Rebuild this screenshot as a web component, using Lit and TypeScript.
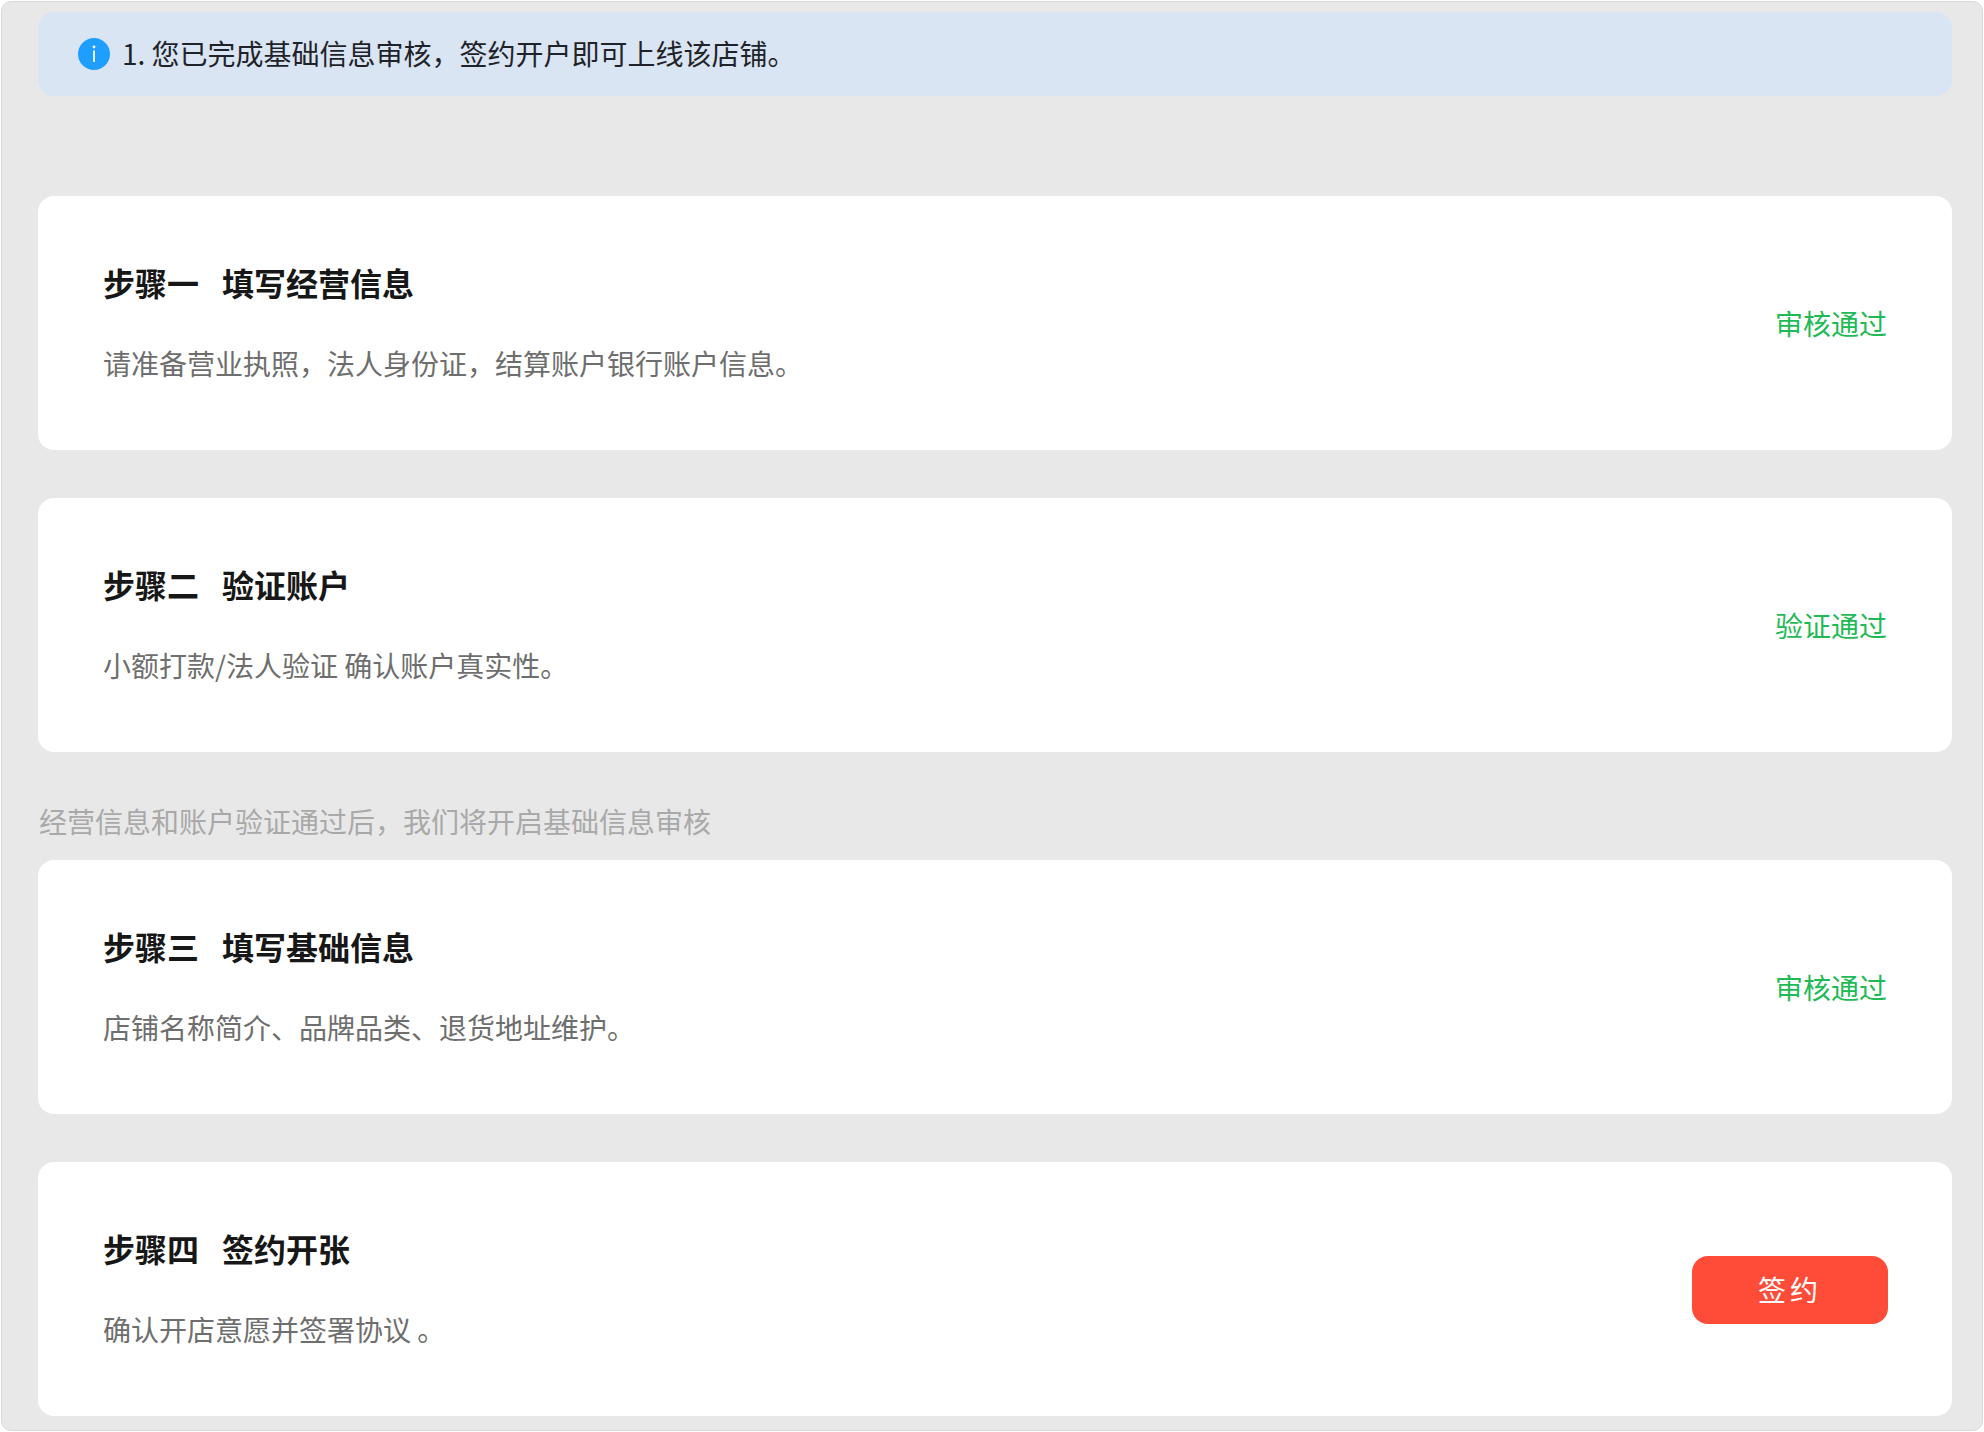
import { LitElement, html, css } from "lit";
import { customElement } from "lit/decorators.js";

interface Step {
  label: string;
  name: string;
  desc: string;
  status?: string;
  note?: string;
}

const STEPS: Step[] = [
  { label: "步骤一", name: "填写经营信息", desc: "请准备营业执照，法人身份证，结算账户银行账户信息。", status: "审核通过" },
  { label: "步骤二", name: "验证账户", desc: "小额打款/法人验证 确认账户真实性。", status: "验证通过" },
  { label: "步骤三", name: "填写基础信息", desc: "店铺名称简介、品牌品类、退货地址维护。", status: "审核通过", note: "经营信息和账户验证通过后，我们将开启基础信息审核" },
  { label: "步骤四", name: "签约开张", desc: "确认开店意愿并签署协议 。" },
];

@customElement("app-root")
export class AppRoot extends LitElement {
  static styles = css`
    :host {
      display: block;
      width: 1984px;
      height: 1432px;
      background: #fff;
      font-family: "Noto Sans CJK SC", "Liberation Sans", sans-serif;
    }
    .panel {
      box-sizing: border-box;
      width: 1982px;
      height: 1430px;
      margin: 1px;
      padding: 10px 30px 0 36px;
      background: #e8e8e8;
      border: 1px solid #d9d9d9;
      border-radius: 10px;
      display: flex;
      flex-direction: column;
      overflow: hidden;
    }
    .banner {
      height: 84px;
      flex: none;
      box-sizing: border-box;
      padding-left: 40px;
      display: flex;
      align-items: center;
      gap: 12px;
      background: #d9e5f3;
      border-radius: 16px;
      color: #1f2329;
      font-size: 28px;
      line-height: 40px;
      margin-bottom: 100px;
    }
    .banner-text {
      padding-bottom: 2px;
    }
    .icon {
      width: 32px;
      height: 32px;
      flex: none;
      display: block;
    }
    .note {
      flex: none;
      height: 108px;
      box-sizing: border-box;
      padding: 49px 0 0 1px;
      font-size: 28px;
      line-height: 40px;
      color: #a9a9a9;
    }
    .card {
      flex: none;
      box-sizing: border-box;
      height: 254px;
      padding: 0 64px 0 65px;
      background: #fff;
      border-radius: 16px;
      display: flex;
      align-items: center;
      justify-content: space-between;
    }
    .card + .card {
      margin-top: 48px;
    }
    .body {
      padding-bottom: 3px;
    }
    .title {
      display: flex;
      gap: 23px;
      font-size: 32px;
      line-height: 44px;
      font-weight: 700;
      color: #171717;
    }
    .desc {
      margin-top: 39px;
      font-size: 28px;
      line-height: 40px;
      color: #6e6e6e;
    }
    .status {
      margin-right: 1px;
      font-size: 28px;
      line-height: 40px;
      color: #1fba55;
    }
    .sign {
      width: 196px;
      height: 68px;
      margin-top: 2px;
      border: 0;
      padding: 0 0 2px;
      border-radius: 16px;
      background: #ff4c38;
      color: #fff;
      font: inherit;
      font-size: 28px;
      letter-spacing: 4px;
    }
  `;

  private renderStep(s: Step) {
    return html`
      ${s.note ? html`<div class="note">${s.note}</div>` : null}
      <section class="card">
        <div class="body">
          <div class="title"><span>${s.label}</span><span>${s.name}</span></div>
          <div class="desc">${s.desc}</div>
        </div>
        ${s.status
          ? html`<div class="status">${s.status}</div>`
          : html`<button class="sign">签约</button>`}
      </section>
    `;
  }

  render() {
    return html`
      <div class="panel">
        <div class="banner">
          <svg class="icon" viewBox="0 0 32 32" aria-hidden="true">
            <circle cx="16" cy="16" r="16" fill="#1e9fff"></circle>
            <circle cx="16" cy="9" r="1.4" fill="#fff"></circle>
            <rect x="15.1" y="12.5" width="1.8" height="11.5" fill="#fff"></rect>
          </svg>
          <span class="banner-text">1. 您已完成基础信息审核，签约开户即可上线该店铺。</span>
        </div>
        ${STEPS.map((s) => this.renderStep(s))}
      </div>
    `;
  }
}
